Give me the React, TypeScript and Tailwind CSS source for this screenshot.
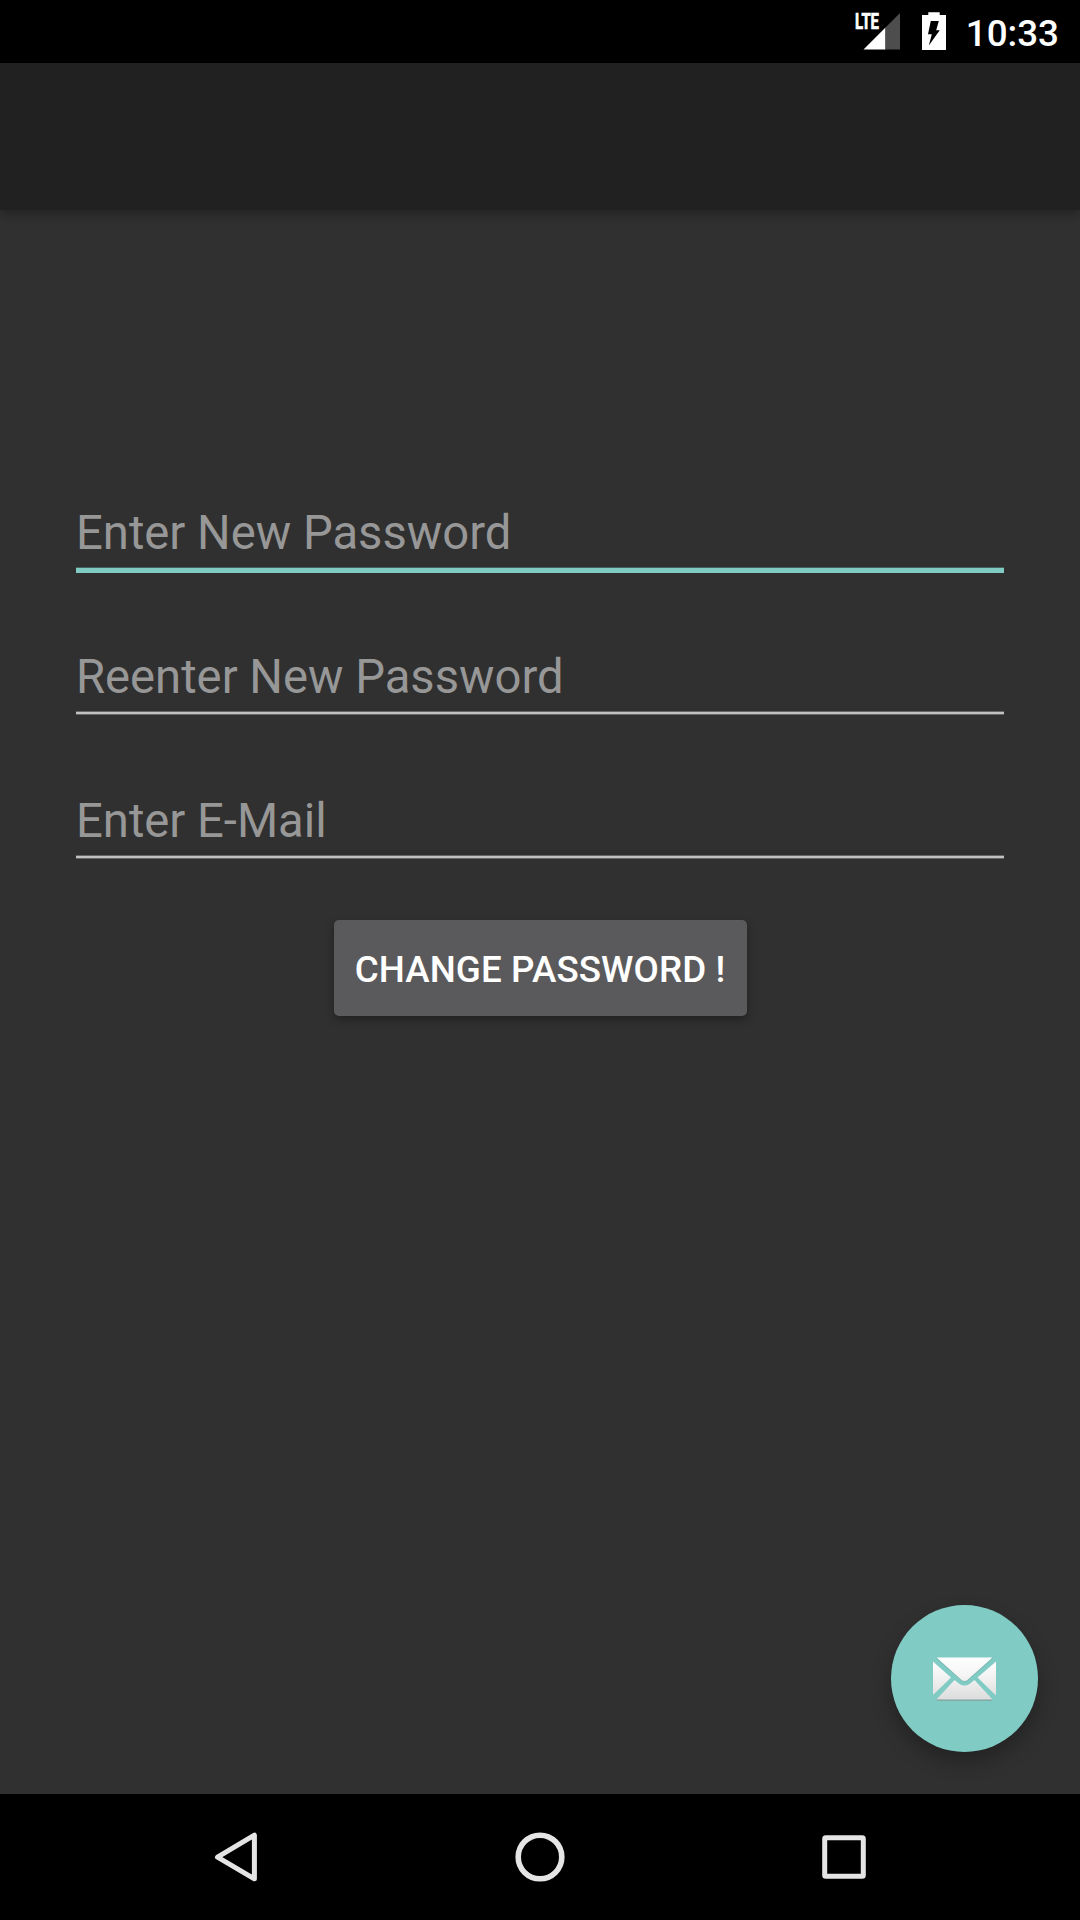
import React from 'react';

function StatusBar() {
  return (
    <header className="flex h-[63px] shrink-0 items-start justify-end bg-black pr-[21px] text-white">
      <svg className="mt-3 h-[38px] w-[48px] overflow-visible" viewBox="0 0 48 38">
        <text
          x="1"
          y="17"
          fill="#fff"
          stroke="#fff"
          strokeWidth="0.7"
          fontFamily="Roboto, sans-serif"
          fontWeight="700"
          fontSize="22"
          textLength="24"
          lengthAdjust="spacingAndGlyphs"
        >
          LTE
        </text>
        <path d="M9.5 37.5 L31.5 15.5 V37.5Z" fill="#fff" />
        <path d="M31.5 15.5 L46 1 V37.5 H31.5Z" fill="#4d4d4d" />
      </svg>
      <svg className="mt-3 ml-5 h-[38px] w-6" viewBox="0 0 24 38">
        <path d="M6.3 0.3 H17.7 V3 H24 V38 H0 V3 H6.3Z" fill="#fff" />
        <path d="M8.8 9 H16.8 L14.2 18.2 H17.8 L6.8 33.5 L9.8 22.3 H6Z" fill="#000" />
      </svg>
      <time className="ml-5 mt-3 font-[Roboto,sans-serif] text-[36.75px] font-medium leading-[44px]">10:33</time>
    </header>
  );
}

function Field({ label, active = false }: { label: string; active?: boolean }) {
  return (
    <label className="flex h-[144px] flex-col">
      <input
        type="text"
        placeholder={label}
        className="h-[70px] w-full bg-transparent pt-[2px] text-[47.2px] leading-[68px] text-white outline-none placeholder:text-[#979797] placeholder:opacity-100"
      />
      {active ? (
        <span className="h-1.5 w-full border-t border-[#45615f] bg-[#80cbc4]" />
      ) : (
        <span className="h-1 w-full border-y border-[#666666] bg-[#c1c1c1]" />
      )}
    </label>
  );
}

function MailIcon() {
  return (
    <svg className="mt-0.5 h-[45px] w-[63px]" viewBox="0 0 63 45">
      <defs>
        <linearGradient id="paper" x1="0" y1="0" x2="0" y2="43" gradientUnits="userSpaceOnUse">
          <stop offset="0" stopColor="#ffffff" />
          <stop offset="0.4" stopColor="#f5f5f5" />
          <stop offset="1" stopColor="#dcdcdc" />
        </linearGradient>
      </defs>
      <path d="M3 42 H60 L58.5 43.8 H4.5Z" fill="#7f9f9c" />
      <path d="M3.5 0.5 L28 22.5 Q31.5 25.5 35 22.5 L59.5 0.5" fill="none" stroke="#6f9995" strokeOpacity="0.5" strokeWidth="1.4" />
      <g fill="url(#paper)">
        <path d="M3.5 0.5 H59.5 L35 22.5 Q31.5 25.5 28 22.5Z" />
        <path d="M0 4.5 L18 20.5 L0 38Z" />
        <path d="M63 4.5 L44.5 20.5 L63 38.5Z" />
        <path d="M3.5 42.5 L21.5 23 L26.5 27 Q31.5 30 36.5 27 L41.5 23 L59.5 42.5Z" />
      </g>
    </svg>
  );
}

function NavigationBar() {
  return (
    <nav className="flex h-[126px] shrink-0 items-center justify-between bg-black px-[214px]">
      <button aria-label="Back">
        <svg className="h-[50px] w-11" viewBox="0 0 44 50" fill="none" stroke="#e5e5e5" strokeWidth="5" strokeLinejoin="round">
          <path d="M3.5 25.2 L40.4 3.2 V46.8Z" />
        </svg>
      </button>
      <button aria-label="Home">
        <svg className="h-[50px] w-[50px]" viewBox="0 0 50 50" fill="none" stroke="#e5e5e5" strokeWidth="5.6">
          <circle cx="25" cy="25" r="21.8" />
        </svg>
      </button>
      <button aria-label="Recents">
        <svg className="h-[50px] w-11" viewBox="0 0 44 50" fill="none" stroke="#e5e5e5" strokeWidth="5" strokeLinejoin="round">
          <rect x="2.7" y="5.7" width="38.6" height="38.6" rx="1" />
        </svg>
      </button>
    </nav>
  );
}

export default function App() {
  return (
    <div className="flex h-[1920px] w-[1080px] flex-col overflow-hidden bg-[#303030] font-[Roboto,sans-serif]">
      <StatusBar />
      <div className="z-10 h-[147px] shrink-0 bg-[#212121] shadow-[0_4px_10px_rgba(0,0,0,0.3)]" />
      <main className="relative flex flex-1 flex-col px-[76px] pt-[287px]">
        <Field label="Enter New Password" active />
        <Field label="Reenter New Password" />
        <Field label="Enter E-Mail" />
        <button className="-mt-[9px] flex h-24 w-[413px] items-center justify-center self-center rounded-[5px] bg-[#5a5a5c] pt-[3px] text-[36.75px] font-medium tracking-[0.1px] text-white shadow-[0_4px_8px_rgba(0,0,0,0.3)]">
          CHANGE PASSWORD !
        </button>
        <button
          aria-label="Mail"
          className="absolute right-[42px] bottom-[42px] flex h-[147px] w-[147px] items-center justify-center rounded-full bg-[#80cbc4] shadow-[0_10px_20px_rgba(0,0,0,0.28)]"
        >
          <MailIcon />
        </button>
      </main>
      <NavigationBar />
    </div>
  );
}
